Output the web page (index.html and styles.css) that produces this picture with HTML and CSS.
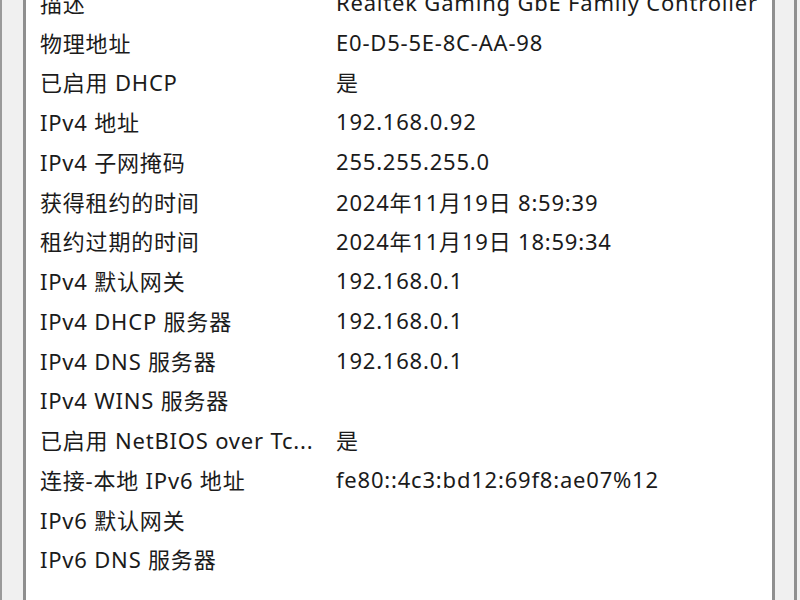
FILE: index.html
```html
<!DOCTYPE html>
<html lang="zh-CN">
<head>
<meta charset="utf-8">
<title>网络连接详细信息</title>
<link rel="stylesheet" href="styles.css">
</head>
<body>
<div class="frame">
  <div class="gutter-left"></div>
  <div class="panel">
    <div class="rows">
      <div class="row"><span class="label">描述</span><span class="value">Realtek Gaming GbE Family Controller</span></div>
      <div class="row"><span class="label">物理地址</span><span class="value">E0-D5-5E-8C-AA-98</span></div>
      <div class="row"><span class="label">已启用 DHCP</span><span class="value">是</span></div>
      <div class="row"><span class="label">IPv4 地址</span><span class="value">192.168.0.92</span></div>
      <div class="row"><span class="label">IPv4 子网掩码</span><span class="value">255.255.255.0</span></div>
      <div class="row"><span class="label">获得租约的时间</span><span class="value">2024年11月19日 8:59:39</span></div>
      <div class="row"><span class="label">租约过期的时间</span><span class="value">2024年11月19日 18:59:34</span></div>
      <div class="row"><span class="label">IPv4 默认网关</span><span class="value">192.168.0.1</span></div>
      <div class="row"><span class="label">IPv4 DHCP 服务器</span><span class="value">192.168.0.1</span></div>
      <div class="row"><span class="label">IPv4 DNS 服务器</span><span class="value">192.168.0.1</span></div>
      <div class="row"><span class="label">IPv4 WINS 服务器</span><span class="value"></span></div>
      <div class="row"><span class="label">已启用 NetBIOS over Tc...</span><span class="value">是</span></div>
      <div class="row"><span class="label">连接-本地 IPv6 地址</span><span class="value">fe80::4c3:bd12:69f8:ae07%12</span></div>
      <div class="row"><span class="label">IPv6 默认网关</span><span class="value"></span></div>
      <div class="row"><span class="label">IPv6 DNS 服务器</span><span class="value"></span></div>
    </div>
  </div>
  <div class="gutter-right"></div>
</div>
</body>
</html>
```
FILE: styles.css
```css
html, body {
  margin: 0;
  padding: 0;
  width: 800px;
  height: 600px;
  overflow: hidden;
  background: #f0f0f0;
}

.frame {
  display: flex;
  height: 600px;
}

.gutter-left {
  width: 21px;
  flex: none;
  background: #f0f0f0;
  border-left: 2px solid #9a9a9a;
  border-right: 3px solid #8f8f8f;
}

.panel {
  width: 746px;
  flex: none;
  background: #ffffff;
  overflow: hidden;
}

.gutter-right {
  flex: 1;
  background: #f0f0f0;
  border-left: 3px solid #8f8f8f;
  border-right: 3px solid #8f8f8f;
  margin-right: 3px;
}

.rows {
  margin-top: -18px;
  padding-left: 14px;
  font-family: "Noto Sans", "Noto Sans CJK SC", sans-serif;
  font-size: 22px;
  letter-spacing: 0.8px;
  color: #1b1b1b;
}

.row {
  display: flex;
  align-items: center;
  height: 39.75px;
  white-space: nowrap;
}

.label {
  width: 296px;
  flex: none;
  overflow: hidden;
}

.value {
  flex: 1;
}
```
